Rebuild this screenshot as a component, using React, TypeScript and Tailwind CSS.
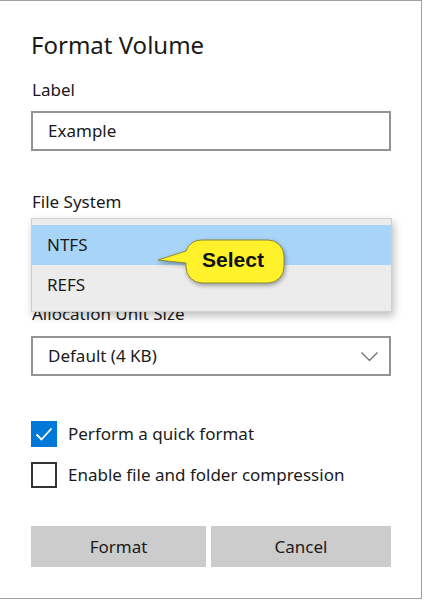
import React from "react";

const font = { fontFamily: '"Noto Sans", "Open Sans", sans-serif' };

function Check({ checked, label }: { checked?: boolean; label: string }) {
  return (
    <div className="flex items-center h-[26px] gap-[11px]">
      {checked ? (
        <div className="w-[26px] h-[26px] bg-[#0078d7] flex items-center justify-center">
          <svg width="18" height="14" viewBox="0 0 18 14" fill="none">
            <path d="M1.5 7.5L6.5 12.5L16.5 1.5" stroke="#fff" strokeWidth="1.8" />
          </svg>
        </div>
      ) : (
        <div className="w-[26px] h-[26px] border-2 border-[#333]" />
      )}
      <span className="text-[17px] leading-[24px] text-[#1a1a1a]">{label}</span>
    </div>
  );
}

function Callout() {
  return (
    <div className="absolute left-[156px] top-[236px] w-[132px] h-[50px]">
      <svg width="132" height="50" viewBox="0 0 132 50" className="absolute inset-0" style={{ filter: "drop-shadow(1px 2px 2px rgba(0,0,0,0.35))" }}>
        <path
          d="M46 3 H112 A16 16 0 0 1 128 19 V30 A16 16 0 0 1 112 46 H46 A16 16 0 0 1 30 30 V26 L2 23 L30 14 A16 16 0 0 1 46 3 Z"
          fill="#fff22a"
          stroke="#8a8a3a"
          strokeWidth="1"
        />
      </svg>
      <span
        className="absolute left-[46px] top-[10px] text-[21px] leading-[26px] font-bold text-[#111]"
        style={{ fontFamily: '"Liberation Sans", Arial, sans-serif' }}
      >
        Select
      </span>
    </div>
  );
}

export default function App() {
  return (
    <div className="relative w-[422px] h-[599px] bg-white border-t border-r border-b border-[#a0a0a0]" style={font}>
      <div className="flex flex-col pl-[31px] pr-[30px] pt-[28px]">
        <h1 className="text-[24px] leading-[32px] text-[#1a1a1a]">Format Volume</h1>
        <label className="mt-[17px] text-[17px] leading-[24px] text-[#1a1a1a] pl-[1px]">Label</label>
        <div className="mt-[9px] h-[40px] border-2 border-[#939393] flex items-center px-[15px] text-[17px] text-[#1a1a1a]">
          Example
        </div>
        <label className="mt-[39px] text-[17px] leading-[24px] text-[#1a1a1a] pl-[1px]">File System</label>
        <div className="mt-[4px] h-[40px] border-2 border-[#939393]" />
        <label className="mt-[44px] text-[17px] leading-[24px] text-[#1a1a1a] pl-[1px]">Allocation Unit Size</label>
        <div className="mt-[10px] h-[40px] border-2 border-[#939393] flex items-center justify-between pl-[15px] pr-[11px] text-[17px] text-[#1a1a1a]">
          <span>Default (4 KB)</span>
          <svg width="17" height="9" viewBox="0 0 17 9" fill="none">
            <path d="M0.5 0.5L8.5 8.5L16.5 0.5" stroke="#6b6b6b" strokeWidth="1.2" />
          </svg>
        </div>
        <div className="mt-[45px] flex flex-col gap-[15px]">
          <Check checked label="Perform a quick format" />
          <Check label="Enable file and folder compression" />
        </div>
        <div className="mt-[38px] flex gap-[5px]">
          <button className="w-[175px] h-[41px] bg-[#cccccc] text-[17px] text-[#1a1a1a]">Format</button>
          <button className="flex-1 h-[41px] bg-[#cccccc] text-[17px] text-[#1a1a1a]">Cancel</button>
        </div>
      </div>

      <div className="absolute left-[31px] top-[217px] w-[361px] h-[94px] bg-[#ececec] border border-[#cfcfcf] shadow-[2px_4px_8px_rgba(0,0,0,0.25)] pt-[6px]">
        <div className="h-[40px] bg-[#a8d4f8] flex items-center pl-[15px] text-[17px] text-[#1a1a1a]">NTFS</div>
        <div className="h-[40px] flex items-center pl-[15px] text-[17px] text-[#1a1a1a]">REFS</div>
      </div>
      <Callout />
    </div>
  );
}
